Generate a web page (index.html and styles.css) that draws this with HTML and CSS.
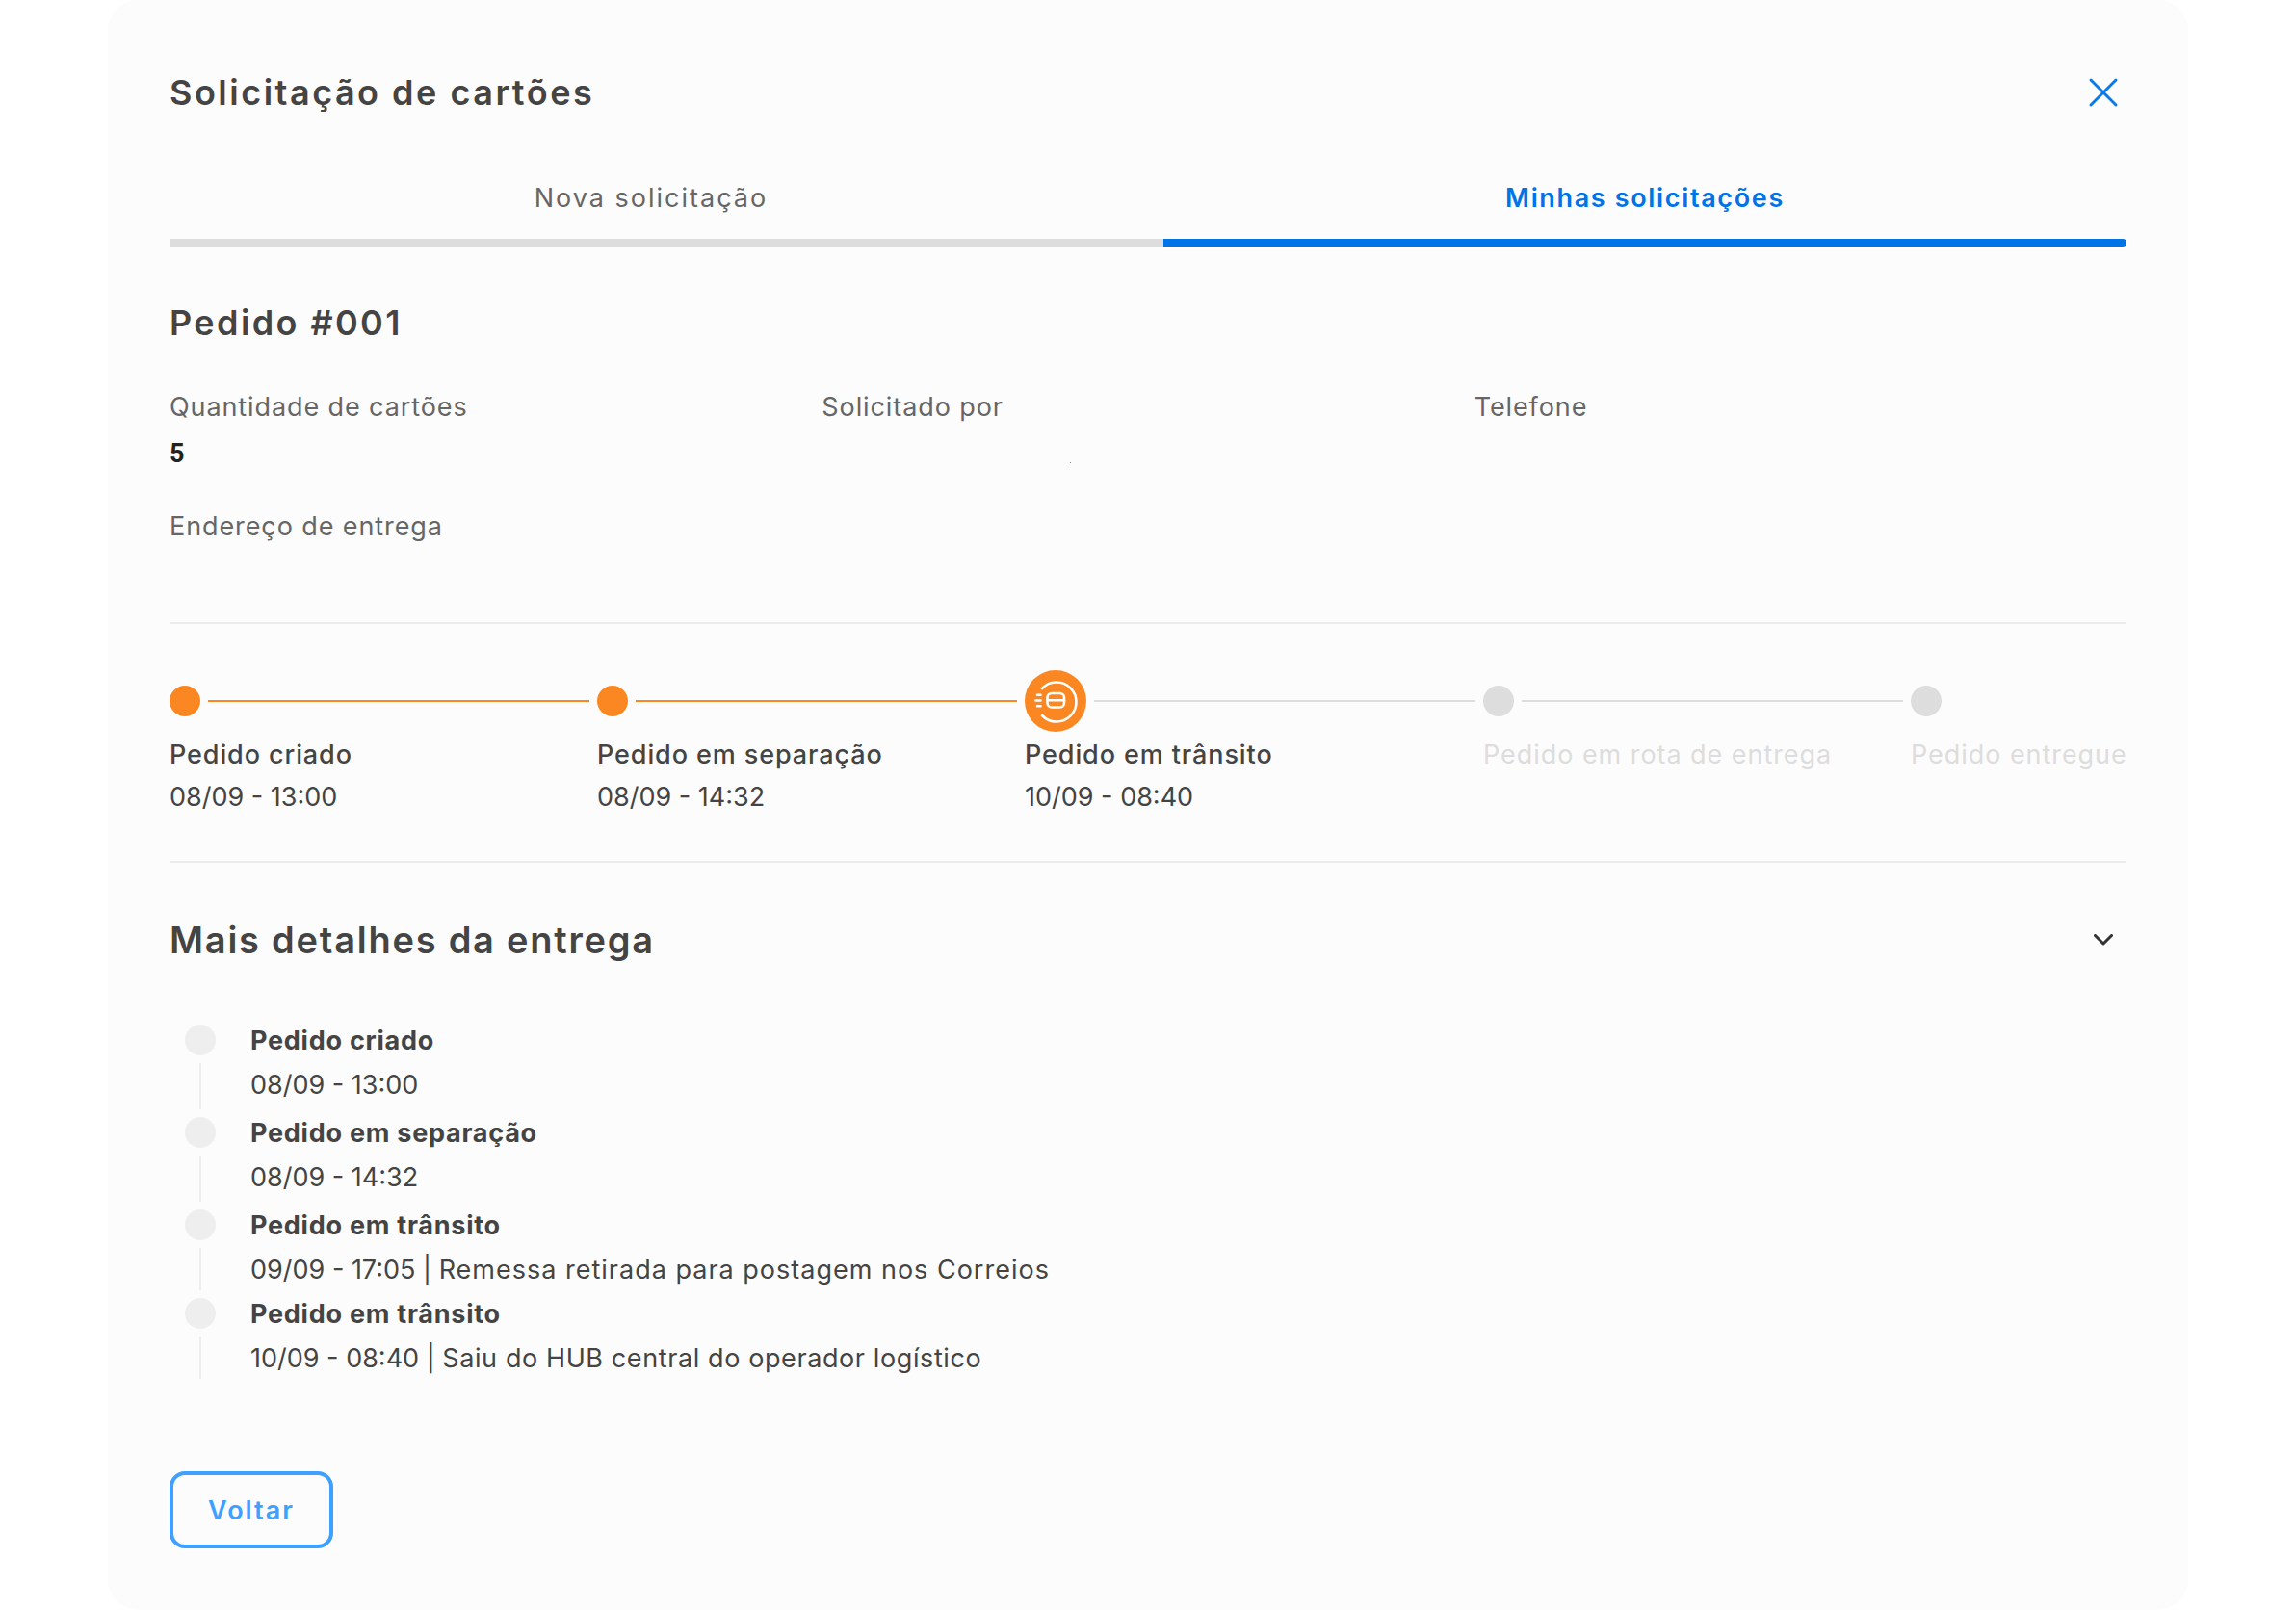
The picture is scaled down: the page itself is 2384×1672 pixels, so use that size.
FILE: index.html
```html
<!DOCTYPE html>
<html lang="pt-BR">
<head>
<meta charset="utf-8">
<title>Solicitação de cartões</title>
<link rel="stylesheet" href="styles.css">
</head>
<body>
<main class="card">
  <header class="head">
    <h1 class="title">Solicitação de cartões</h1>
    <svg class="close" viewBox="0 0 32 32" aria-hidden="true"><path d="M3 3 L29 29 M29 3 L3 29"/></svg>
  </header>
  <nav class="tabs">
    <div class="tab"><span class="tab-label">Nova solicitação</span></div>
    <div class="tab tab-active"><span class="tab-label">Minhas solicitações</span></div>
  </nav>
  <h2 class="order">Pedido #001</h2>
  <section class="fields">
    <div class="field"><div class="label">Quantidade de cartões</div><div class="value">5</div></div>
    <div class="field"><div class="label">Solicitado por</div><div class="speck"></div></div>
    <div class="field"><div class="label">Telefone</div></div>
    <div class="field field-wide"><div class="label">Endereço de entrega</div></div>
  </section>
  <section class="stepper">
    <div class="step done">
      <div class="track"><span class="dot"></span><span class="line"></span></div>
      <div class="step-name">Pedido criado</div><div class="step-date">08/09 - 13:00</div>
    </div>
    <div class="step done">
      <div class="track"><span class="dot"></span><span class="line"></span></div>
      <div class="step-name">Pedido em separação</div><div class="step-date">08/09 - 14:32</div>
    </div>
    <div class="step current">
      <div class="track">
        <svg class="bigdot" viewBox="0 0 64 64" aria-hidden="true">
          <circle cx="32" cy="32" r="32" fill="#fb8722"/>
          <g fill="none" stroke="#fff" stroke-width="2.6" stroke-linecap="round">
            <path d="M18 19 A20.5 20.5 0 1 1 18 47"/>
            <rect x="23.5" y="24" width="17.5" height="14.5" rx="4.5"/>
            <path d="M23.5 31.2 H41"/>
            <path d="M13 25.7 H16.5 M11.5 31.5 H16.5 M13 37.2 H16.5"/>
          </g>
        </svg>
        <span class="line"></span>
      </div>
      <div class="step-name">Pedido em trânsito</div><div class="step-date">10/09 - 08:40</div>
    </div>
    <div class="step todo">
      <div class="track"><span class="dot"></span><span class="line"></span></div>
      <div class="step-name">Pedido em rota de entrega</div>
    </div>
    <div class="step todo last">
      <div class="track"><span class="dot"></span></div>
      <div class="step-name">Pedido entregue</div>
    </div>
  </section>
  <section class="details">
    <div class="details-head">
      <h2 class="details-title">Mais detalhes da entrega</h2>
      <svg class="chevron" viewBox="0 0 20 12" aria-hidden="true"><path d="M1.5 1.5 L10 10 L18.5 1.5"/></svg>
    </div>
    <ul class="log">
      <li class="log-item"><div class="log-rail"><span class="log-dot"></span><span class="log-line"></span></div><div class="log-text"><div class="log-name">Pedido criado</div><div class="log-date">08/09 - 13:00</div></div></li>
      <li class="log-item"><div class="log-rail"><span class="log-dot"></span><span class="log-line"></span></div><div class="log-text"><div class="log-name">Pedido em separação</div><div class="log-date">08/09 - 14:32</div></div></li>
      <li class="log-item short"><div class="log-rail"><span class="log-dot"></span><span class="log-line"></span></div><div class="log-text"><div class="log-name">Pedido em trânsito</div><div class="log-date">09/09 - 17:05 | <span class="log-note">Remessa retirada para postagem nos Correios</span></div></div></li>
      <li class="log-item short"><div class="log-rail"><span class="log-dot"></span><span class="log-line"></span></div><div class="log-text"><div class="log-name">Pedido em trânsito</div><div class="log-date">10/09 - 08:40 | <span class="log-note tight">Saiu do HUB central do operador logístico</span></div></div></li>
    </ul>
  </section>
  <button class="back" type="button">Voltar</button>
</main>
</body>
</html>
```
FILE: styles.css
```css
* { box-sizing: border-box; }
html, body { margin: 0; padding: 0; background: #fff; }
body { font-family: Inter, "Noto Sans", sans-serif; color: #444; }
.card {
  width: 2160px; height: 1672px; margin-left: 112px;
  padding: 0 64px; background: #fcfcfc; border-radius: 32px;
  overflow: hidden;
}
.head { height: 192px; display: flex; justify-content: space-between; align-items: flex-start; }
.title { margin: 72px 0 0; font-size: 36px; line-height: 48px; font-weight: 600; letter-spacing: 2.5px; color: #444; }
.close { width: 32px; height: 32px; margin: 80px 8px 0 0; fill: none; stroke: #0a7be6; stroke-width: 3; stroke-linecap: round; }
.tabs { display: grid; grid-template-columns: 1032px 1000px; height: 64px; }
.tab { display: flex; flex-direction: column; justify-content: space-between; align-items: center; color: #666; font-size: 27px; letter-spacing: 2px; line-height: 28px; font-weight: 400; }
.tab::after { content: ""; align-self: stretch; height: 8px; background: #ddd; }
.tab-label { margin-right: 32px; }
.tab-active { color: #0073e6; font-weight: 600; letter-spacing: 1.65px; }
.tab-active .tab-label { margin-right: 0; }
.tab-active::after { background: #0073e6; border-radius: 0 4px 4px 0; }
.order { margin: 57px 0 0; font-size: 36px; line-height: 44px; font-weight: 600; letter-spacing: 2.4px; color: #444; }
.fields { display: grid; grid-template-columns: repeat(3, 1fr); grid-template-rows: 124px 115px; margin-top: 50px; height: 239px; }
.label { font-size: 27px; line-height: 32px; letter-spacing: 0.9px; color: #666; }
.value { margin-top: 16px; font-family: Roboto, sans-serif; font-size: 27px; line-height: 32px; font-weight: 700; color: #222; }
.speck { width: 1px; height: 1px; margin: 41px 0 0 258px; background: #888; }
.field-wide { grid-column: 1 / -1; }
.stepper { display: flex; height: 250px; padding-top: 48px; border-top: 2px solid #ececec; border-bottom: 2px solid #ececec; }
.step { width: 444px; flex: none; }
.step.current { width: 476px; }
.step.last { width: auto; flex: 1; }
.track { display: flex; align-items: center; gap: 8px; height: 64px; margin-bottom: 4px; }
.dot { width: 32px; height: 32px; border-radius: 50%; flex: none; background: #ddd; }
.line { width: 396px; height: 2px; flex: none; background: #ddd; }
.bigdot { width: 64px; height: 64px; flex: none; }
.done .dot, .done .line { background: #fb8722; }
.step-name { font-size: 27px; line-height: 40px; font-weight: 500; letter-spacing: 0.9px; color: #444; white-space: nowrap; }
.step-date { margin-top: 4px; font-size: 27px; line-height: 40px; color: #444; white-space: nowrap; }
.todo .step-name { color: #ddd; font-weight: 400; letter-spacing: 0.95px; }
.details-head { display: flex; justify-content: space-between; align-items: center; height: 80px; margin-top: 40px; }
.details-title { margin: 0; font-size: 38px; line-height: 78px; font-weight: 600; letter-spacing: 1.76px; color: #444; }
.chevron { width: 20px; height: 12px; margin-right: 14px; fill: none; stroke: #333; stroke-width: 3; stroke-linecap: round; stroke-linejoin: round; }
.log { list-style: none; margin: 48px 0 0; padding: 0; }
.log-item { display: flex; height: 96px; }
.log-item.short { height: 92px; }
.log-rail { width: 84px; padding-left: 16px; display: flex; flex-direction: column; flex: none; }
.log-dot { width: 32px; height: 32px; border-radius: 50%; background: #eee; }
.log-line { width: 2px; height: 48px; margin: 8px 0 0 15px; background: #eee; }
.log-item.short .log-line { height: 44px; }
.log-name { font-size: 27px; line-height: 34px; font-weight: 700; letter-spacing: 0.75px; color: #444; }
.log-date { margin-top: 12px; font-size: 27px; line-height: 34px; color: #444; }
.log-note { letter-spacing: 1px; }
.log-note.tight { letter-spacing: 0.6px; }
.back { display: block; margin-top: 88px; width: 170px; height: 80px; padding: 0; border: 4px solid #3ea0ff; border-radius: 16px; background: transparent; color: #3ea0ff; font-family: inherit; font-size: 27px; font-weight: 600; letter-spacing: 2px; }
```
